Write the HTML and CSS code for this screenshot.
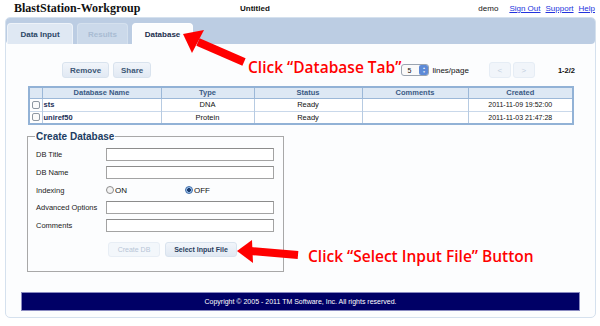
FILE: index.html
```html
<!DOCTYPE html>
<html>
<head>
<meta charset="utf-8">
<link rel="stylesheet" href="styles.css">
</head>
<body>
<header class="top">
  <div class="logo">BlastStation-Workgroup</div>
  <div class="doc">Untitled</div>
  <div class="user"><span class="uname">demo</span><a>Sign Out</a><a>Support</a><a>Help</a></div>
</header>
<main class="panel">
  <nav class="tabbar">
    <div class="tab">Data Input</div>
    <div class="tab dis">Results</div>
    <div class="tab act">Database</div>
  </nav>
  <section class="content">
    <div class="toolbar">
      <button class="btn">Remove</button>
      <button class="btn">Share</button>
      <div class="spacer"></div>
      <div class="sel"><span>5</span><span class="stepper"><i>&#9650;</i><i>&#9660;</i></span></div>
      <span class="lp">lines/page</span>
      <div class="pager"><button class="pbtn">&lt;</button><button class="pbtn">&gt;</button></div>
      <span class="count">1-2/2</span>
    </div>
    <table class="grid">
      <thead>
        <tr><th class="ck"></th><th class="c1">Database Name</th><th class="c2">Type</th><th class="c3">Status</th><th class="c4">Comments</th><th>Created</th></tr>
      </thead>
      <tbody>
        <tr><td class="ck"><span class="box"></span></td><td class="nm">sts</td><td class="ctr">DNA</td><td class="ctr">Ready</td><td></td><td class="ctr dt">2011-11-09 19:52:00</td></tr>
        <tr><td class="ck"><span class="box"></span></td><td class="nm">uniref50</td><td class="ctr">Protein</td><td class="ctr">Ready</td><td></td><td class="ctr dt">2011-11-03 21:47:28</td></tr>
      </tbody>
    </table>
    <fieldset class="create">
      <legend>Create Database</legend>
      <div class="row"><label>DB Title</label><span class="inp"></span></div>
      <div class="row"><label>DB Name</label><span class="inp"></span></div>
      <div class="row radios"><label>Indexing</label><span class="rad"><span class="radio"></span>ON</span><span class="rad"><span class="radio on"></span>OFF</span></div>
      <div class="row"><label>Advanced Options</label><span class="inp"></span></div>
      <div class="row"><label>Comments</label><span class="inp"></span></div>
      <div class="actions"><button class="btn dim">Create DB</button><button class="btn sif">Select Input File</button></div>
    </fieldset>
    <footer class="foot">Copyright © 2005 - 2011 TM Software, Inc. All rights reserved.</footer>
  </section>
</main>
<svg class="arrows" width="600" height="326" viewBox="0 0 600 326">
  <line x1="198" y1="42" x2="244" y2="62" stroke="#f00" stroke-width="8"/>
  <polygon points="183,34 204,30 192,53" fill="#f00"/>
  <line x1="250" y1="251" x2="298" y2="255" stroke="#f00" stroke-width="8"/>
  <polygon points="237,251 252,240 253,263" fill="#f00"/>
</svg>
<div class="note n1">Click “Database Tab”</div>
<div class="note n2">Click “Select Input File” Button</div>
</body>
</html>
```
FILE: styles.css
```css
* { box-sizing: border-box; }
html, body { margin: 0; padding: 0; }
body {
  width: 600px; height: 326px; background: #fff; position: relative; overflow: hidden;
  font-family: "Liberation Sans", Arial, sans-serif; font-size: 8px; color: #111;
}
.top { display: flex; align-items: center; height: 17px; padding: 0 5px 0 14px; }
.logo { font-family: "Liberation Serif", "Times New Roman", serif; font-weight: bold; font-size: 12px; color: #111; width: 226px; }
.doc { font-weight: bold; font-size: 8px; }
.user { margin-left: auto; display: flex; gap: 5px; font-size: 8px; }
.uname { margin-right: 6px; }
.user a { color: #2233dd; text-decoration: underline; }

.panel {
  margin: 0 4px 0 5px; height: 301px; border: 1px solid #d5e1ee; border-radius: 5px;
  background: #fcfdfe; display: flex; flex-direction: column;
}
.tabbar {
  height: 26px; background: #bccde3; border-radius: 4px; display: flex; align-items: flex-end;
  padding-left: 1px; gap: 4px;
}
.tab {
  height: 21px; padding: 0 11px; display: flex; align-items: center; font-weight: bold; color: #2b4766;
  background: #dfe8f3; border: 1px solid #eef3f9; border-bottom: none; border-radius: 4px 4px 0 0;
}
.tab:first-child { width: 66px; justify-content: center; }
.tab.dis { color: #a9bcd3; background: #cbd9ea; border-color: #d5e1ee; width: 51px; justify-content: center; }
.tab.act { background: #fcfdfe; color: #1c2f4d; width: 61px; justify-content: center; border-color: #fff; }

.content { flex: 1; display: flex; flex-direction: column; padding: 0 16px 0 15px; }
.toolbar { display: flex; align-items: center; height: 16px; margin-top: 18px; padding-left: 41px; }
.btn {
  font-family: inherit; font-size: 8px; font-weight: bold; color: #3c5675; height: 16px; padding: 0 7px;
  background: linear-gradient(#f1f5fa, #e1e9f3); border: 1px solid #d9e3ee; border-radius: 3px; margin: 0 4px 0 0;
}
.toolbar .btn:first-child { width: 47px; }
.toolbar .btn:nth-child(2) { width: 38px; }
.spacer { flex: 1; }
.sel {
  width: 28px; height: 12px; border: 1px solid #9aa4b0; border-radius: 3px; display: flex; align-items: center;
  justify-content: space-between; padding-left: 5px; font-size: 7px; background: #fafafa;
}
.stepper { width: 9px; height: 10px; background: #5d8ad6; border-radius: 2px; display: flex; flex-direction: column; align-items: center; justify-content: center; }
.stepper i { font-style: normal; color: #fff; font-size: 3px; line-height: 4px; }
.lp { margin-left: 3px; font-size: 8px; }
.pager { display: flex; gap: 2px; margin-left: 20px; }
.pbtn { width: 22px; height: 16px; border: 1px solid #e6edf5; border-radius: 3px; background: #f1f5fa; color: #c3cfdd; font-size: 8px; padding: 0; font-family: inherit; }
.count { margin-left: 23px; margin-right: 4px; font-weight: bold; font-size: 7.5px; }

.grid {
  margin: 8px 0 0 7px; width: 546px; border-collapse: collapse; border: 2px solid #92b2d6; font-size: 7.5px;
}
.grid th { height: 11px; background: #dde8f4; color: #3a5a84; font-weight: bold; border-left: 1px solid #9cb8d8; border-bottom: 1px solid #9cb8d8; padding: 0; }
.grid td { height: 13px; border-left: 1px solid #b7cbe2; border-top: 1px solid #c9d8ea; padding: 0; background: #fff; }
.grid .ck { width: 13px; border-left: none; }
.c1 { width: 119px; } .c2 { width: 93px; } .c3 { width: 108px; } .c4 { width: 106px; }
.box { display: block; width: 8px; height: 8px; border: 1px solid #8f98a2; border-radius: 2px; margin-left: 2px; background: #fbfbfb; }
.nm { font-weight: bold; color: #1c2e57; padding-left: 1px !important; }
.ctr { text-align: center; }
.dt { font-size: 7px; }

.create {
  margin: 6px 0 0 6px; width: 256px; height: 141px; border: 1px solid #a8a8a8; border-radius: 0; padding: 0 9px 0 8px;
}
.create legend { font-size: 10px; font-weight: bold; color: #203c62; padding: 0 1px; margin-left: -1px; }
.row { display: flex; align-items: center; height: 13px; margin-top: 5px; }
.row:first-of-type { margin-top: 6px; }
.row label { width: 70px; font-size: 7.5px; color: #222; }
.inp { width: 168px; height: 13px; border: 1px solid #a3a3a3; border-top-color: #8c8c8c; background: #fff; }
.radios { height: 12px; }
.rad { display: flex; align-items: center; font-size: 8px; width: 79px; }
.radio { width: 8px; height: 8px; border-radius: 50%; border: 1px solid #8d8d8d; background: #f3f3f3; margin-right: 1px; }
.radio.on { border-color: #406da8; background: radial-gradient(circle, #1d3e70 0 1.6px, #9dc1ec 2.2px); }
.actions { display: flex; margin: 10px 0 0 72px; }
.actions .btn { height: 15px; font-size: 7px; padding: 0; margin-right: 5px; }
.btn.dim { width: 52px; color: #b7c5d6; font-weight: normal; background: #f3f7fb; border-color: #e8eef5; }
.btn.sif { width: 72px; color: #2a3f5e; }

.foot {
  margin: 20px 0 0 0; width: 559px; height: 19px; background: #000066; border: 1px solid #8a8ac0;
  color: #fff; font-size: 7px; display: flex; align-items: center; justify-content: center;
}

.arrows { position: absolute; left: 0; top: 0; pointer-events: none; }
.note { position: absolute; color: #f00; font-family: "Open Sans", sans-serif; font-weight: 600; font-size: 15.5px; white-space: nowrap; line-height: 1; }
.n1 { left: 248px; top: 60px; }
.n2 { left: 308px; top: 249px; }
```
